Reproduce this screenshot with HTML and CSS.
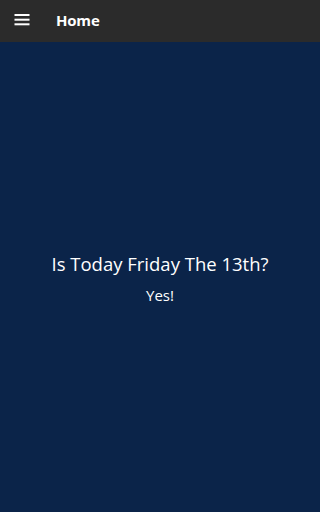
FILE: index.html
```html
<!DOCTYPE html>
<html>
<head>
<meta charset="utf-8">
<link rel="stylesheet" href="styles.css">
</head>
<body>
<div class="app">
  <header class="bar">
    <svg class="menu" width="16" height="12" viewBox="0 0 16 12">
      <rect x="0.5" y="0" width="15" height="2" fill="#fff"/>
      <rect x="0.5" y="4.7" width="15" height="2" fill="#fff"/>
      <rect x="0.5" y="9.3" width="15" height="2" fill="#fff"/>
    </svg>
    <span class="title">Home</span>
  </header>
  <main class="content">
    <div class="question">Is Today Friday The 13th?</div>
    <div class="answer">Yes!</div>
  </main>
</div>
</body>
</html>
```
FILE: styles.css
```css
html, body {
  margin: 0;
  padding: 0;
  height: 100%;
}
body {
  font-family: "Open Sans", "Noto Sans", sans-serif;
  background: #0b2449;
}
.app {
  display: flex;
  flex-direction: column;
  height: 100%;
}
.bar {
  height: 42px;
  flex: none;
  background: #2b2b2b;
  display: flex;
  align-items: center;
  padding-left: 14px;
}
.menu {
  display: block;
  margin-bottom: 3px;
}
.title {
  color: #fff;
  font-weight: 700;
  font-size: 15px;
  line-height: 20px;
  margin-left: 26px;
  margin-bottom: 2px;
  letter-spacing: -0.2px;
}
.content {
  flex: 1;
  display: flex;
  flex-direction: column;
  align-items: center;
  padding-top: 210px;
  color: #fff;
}
.question {
  font-size: 18.5px;
  line-height: 24px;
}
.answer {
  font-size: 15px;
  margin-top: 9px;
  line-height: 20px;
}
```
